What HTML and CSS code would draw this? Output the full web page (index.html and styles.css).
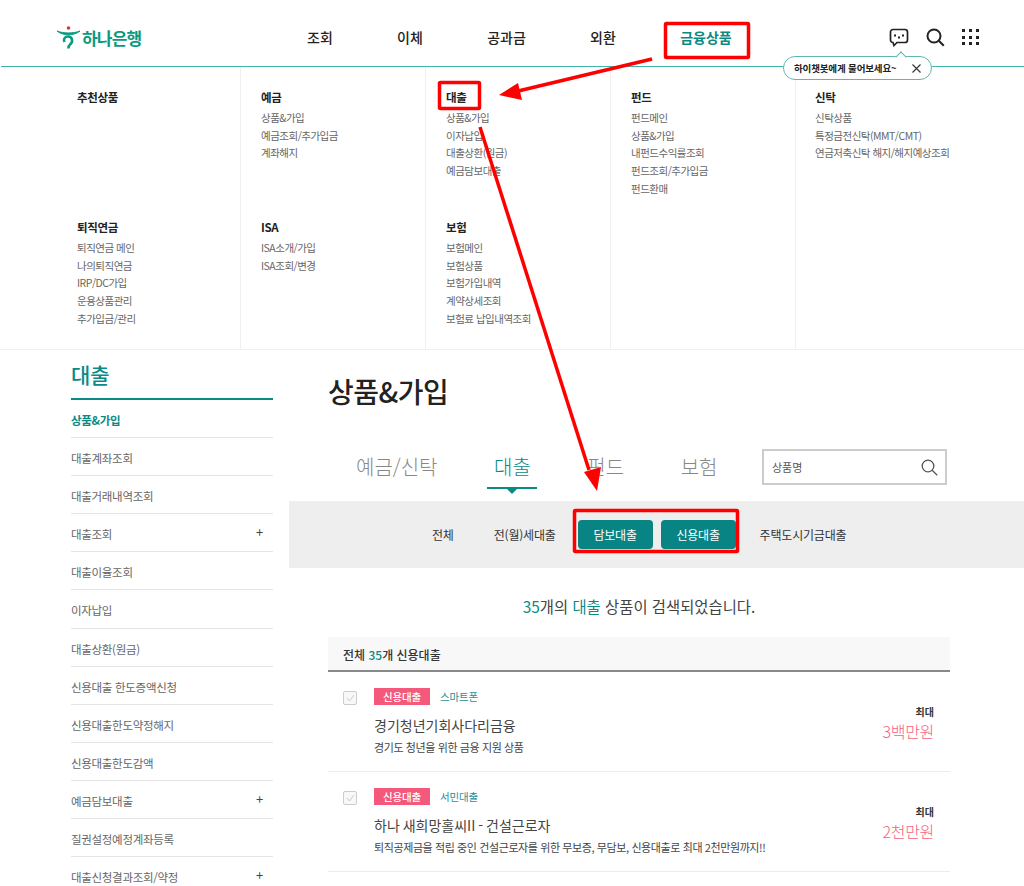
FILE: index.html
```html
<!DOCTYPE html>
<html lang="ko">
<head>
    <meta charset="UTF-8">
    <title>상품&amp;가입</title>
    <link rel="stylesheet" href="styles.css">
</head>
<body>
<div class="page">

    <header class="top">
        <div class="logo">
            <svg class="logo-mark" width="23" height="23" viewBox="0 0 23 23">
                <circle cx="11.500" cy="2" r="1.800" fill="#e0303a"/>
                <path d="M0 5c6 2.600 17 2.600 23 0-6 5-17 5-23 0z" fill="#0a9a80" stroke="#0a9a80" stroke-width="1"/>
                <path d="M7.500 16c-1.500-3 .5-5.500 3.500-5.500 4.500 0 5.500 5.500 2 8-1 .8-1.500 2-1.500 4" fill="none" stroke="#0a9a80" stroke-width="2.600"/>
            </svg>
            <span>하나은행</span>
        </div>
        <nav class="gnb">
            <a>조회</a>
            <a>이체</a>
            <a>공과금</a>
            <a>외환</a>
            <a class="on">금융상품</a>
        </nav>
        <div class="top-icons">
            <svg width="20" height="19" viewBox="0 0 20 19" fill="none" stroke="#222" stroke-width="1.700">
                <path d="M4 1.500h12a2.500 2.500 0 0 1 2.500 2.500v8a2.500 2.500 0 0 1-2.500 2.500H8l-3 3-1-3a2.500 2.500 0 0 1-2.500-2.500V4A2.500 2.500 0 0 1 4 1.500z"/>
                <path d="M5 7.500h2M13 7.500h2M9 9.500h2" stroke-width="2"/>
            </svg>
            <svg width="19" height="19" viewBox="0 0 19 19" fill="none" stroke="#222" stroke-width="2">
                <circle cx="8" cy="8" r="6.500"/>
                <path d="M12.800 12.800l5 5"/>
            </svg>
            <div class="dots">
                <i></i><i></i><i></i><i></i><i></i><i></i><i></i><i></i><i></i>
            </div>
        </div>
        <div class="chat-tip">
            <span>하이챗봇에게 물어보세요~</span>
            <svg width="9" height="9" viewBox="0 0 9 9" stroke="#333" stroke-width="1.100"><path d="M.5.500l8 8M8.500.500l-8 8"/></svg>
        </div>
    </header>

    <section class="mega">
        <div class="mega-col first">
            <h3>추천상품</h3>
        </div>
        <div class="mega-col">
            <h3>예금</h3>
            <a>상품&amp;가입</a><a>예금조회/추가입금</a><a>계좌해지</a>
        </div>
        <div class="mega-col">
            <h3>대출</h3>
            <a>상품&amp;가입</a><a>이자납입</a><a>대출상환(원금)</a><a>예금담보대출</a>
        </div>
        <div class="mega-col">
            <h3>펀드</h3>
            <a>펀드메인</a><a>상품&amp;가입</a><a>내펀드수익률조회</a><a>펀드조회/추가입금</a><a>펀드환매</a>
        </div>
        <div class="mega-col last">
            <h3>신탁</h3>
            <a>신탁상품</a><a>특정금전신탁(MMT/CMT)</a><a>연금저축신탁 해지/해지예상조회</a>
        </div>
        <div class="mega-col first">
            <h3>퇴직연금</h3>
            <a>퇴직연금 메인</a><a>나의퇴직연금</a><a>IRP/DC가입</a><a>운용상품관리</a><a>추가입금/관리</a>
        </div>
        <div class="mega-col">
            <h3>ISA</h3>
            <a>ISA소개/가입</a><a>ISA조회/변경</a>
        </div>
        <div class="mega-col">
            <h3>보험</h3>
            <a>보험메인</a><a>보험상품</a><a>보험가입내역</a><a>계약상세조회</a><a>보험료 납입내역조회</a>
        </div>
        <div class="mega-col"></div>
        <div class="mega-col last"></div>
    </section>

    <div class="content">
        <aside class="side">
            <h2>대출</h2>
            <ul>
                <li class="on">상품&amp;가입</li>
                <li>대출계좌조회</li>
                <li>대출거래내역조회</li>
                <li class="more">대출조회</li>
                <li>대출이율조회</li>
                <li>이자납입</li>
                <li>대출상환(원금)</li>
                <li>신용대출 한도증액신청</li>
                <li>신용대출한도약정해지</li>
                <li>신용대출한도감액</li>
                <li class="more">예금담보대출</li>
                <li>질권설정예정계좌등록</li>
                <li class="more">대출신청결과조회/약정</li>
            </ul>
        </aside>

        <main class="main">
            <h1>상품&amp;가입</h1>
            <div class="tab-row">
                <div class="tabs">
                    <a>예금/신탁</a>
                    <a class="on">대출</a>
                    <a>펀드</a>
                    <a>보험</a>
                </div>
                <div class="search">
                    <span>상품명</span>
                    <svg width="17" height="17" viewBox="0 0 17 17" fill="none" stroke="#555" stroke-width="1.300">
                        <circle cx="7" cy="7" r="5.800"/>
                        <path d="M11.200 11.200l5 5"/>
                    </svg>
                </div>
            </div>
            <div class="band">
                <a>전체</a>
                <a>전(월)세대출</a>
                <div class="band-btns">
                    <a class="btn">담보대출</a>
                    <a class="btn">신용대출</a>
                </div>
                <a>주택도시기금대출</a>
            </div>
            <p class="result"><em>35</em>개의 <em>대출</em> 상품이 검색되었습니다.</p>

            <div class="list-head">전체 <em>35</em>개 신용대출</div>

            <div class="item">
                <span class="check">
                    <svg width="9" height="8" viewBox="0 0 9 8" fill="none" stroke="#ccc" stroke-width="1"><path d="M1 4l2.500 3L8 1"/></svg>
                </span>
                <div class="item-body">
                    <div class="item-tags"><b>신용대출</b><span>스마트폰</span></div>
                    <h4>경기청년기회사다리금융</h4>
                    <p>경기도 청년을 위한 금융 지원 상품</p>
                </div>
                <div class="item-limit">
                    <small>최대</small>
                    <strong>3백만원</strong>
                </div>
            </div>
            <div class="item">
                <span class="check">
                    <svg width="9" height="8" viewBox="0 0 9 8" fill="none" stroke="#ccc" stroke-width="1"><path d="M1 4l2.500 3L8 1"/></svg>
                </span>
                <div class="item-body">
                    <div class="item-tags"><b>신용대출</b><span>서민대출</span></div>
                    <h4>하나 새희망홀씨II - 건설근로자</h4>
                    <p>퇴직공제금을 적립 중인 건설근로자를 위한 무보증, 무담보, 신용대출로 최대 2천만원까지!!</p>
                </div>
                <div class="item-limit">
                    <small>최대</small>
                    <strong>2천만원</strong>
                </div>
            </div>
        </main>
    </div>

    <!-- 빨간 표시 -->
    <svg class="marks" width="1024" height="886" viewBox="0 0 1024 886" fill="none">
        <rect x="665.500" y="23.500" width="83" height="34" rx="1" stroke="#f00" stroke-width="3.500"/>
        <rect x="439.500" y="82.500" width="40" height="26" rx="1" stroke="#f00" stroke-width="3.500"/>
        <rect x="574.500" y="510.500" width="163" height="41" rx="1" stroke="#f00" stroke-width="3.500"/>
        <path d="M652 59L514 92" stroke="#f00" stroke-width="3.500"/>
        <path d="M499 95l19-12 4 17z" fill="#f00"/>
        <path d="M480 127L589 470" stroke="#f00" stroke-width="3.500"/>
        <path d="M597 491l-13-19 17-5z" fill="#f00"/>
    </svg>
</div>
</body>
</html>
```

FILE: styles.css
```css
*{
    padding: 0;
    margin: 0;
    box-sizing: border-box;
}
body{
    font-family: "Noto Sans CJK KR", "Noto Sans", sans-serif;
    color: #333;
    background: #fff;
}
em{
    font-style: normal;
    color: #0a8a85;
}
.page{
    width: 1024px;
    height: 886px;
    overflow: hidden;
    position: relative;
}
.marks{
    position: absolute;
    top: 0;
    left: 0;
}

/* 상단 */
.top{
    height: 67px;
    margin-left: 1px;
    padding-left: 56px;
    padding-top: 9px;
    display: flex;
    align-items: center;
    border-bottom: 1px solid #3fb5ae;
    position: relative;
}
.logo{
    width: 250px;
    display: flex;
    align-items: center;
    gap: 2px;
    margin-top: -1px;
    color: #0a9a80;
    font-size: 17px;
    font-weight: 700;
    letter-spacing: -.8px;
}
.gnb{
    display: flex;
    gap: 64.300px;
    margin-top: -1px;
}
.gnb a{
    font-size: 14px;
    font-weight: 500;
    color: #222;
}
.gnb .on{
    color: #0a8a80;
    font-weight: 700;
}
.top-icons{
    margin-left: auto;
    margin-right: 45px;
    display: flex;
    align-items: center;
    gap: 17px;
    margin-top: -1px;
}
.dots{
    width: 17px;
    display: grid;
    grid-template-columns: repeat(3, 3px);
    justify-content: space-between;
    row-gap: 3.500px;
}
.dots i{
    width: 3px;
    height: 3px;
    background: #222;
}
.chat-tip{
    position: absolute;
    top: 56px;
    left: 782px;
    width: 149px;
    height: 24px;
    padding: 0 10px;
    display: flex;
    align-items: center;
    justify-content: space-between;
    background: #fff;
    border: 1px solid #5cb8b0;
    border-radius: 12px;
    font-size: 9.500px;
    font-weight: 700;
    letter-spacing: -.15px;
    color: #222;
}
.chat-tip:before{
    content: "";
    position: absolute;
    top: -4px;
    left: 113px;
    width: 7px;
    height: 7px;
    background: #fff;
    border-left: 1px solid #5cb8b0;
    border-top: 1px solid #5cb8b0;
    transform: rotate(45deg);
}

/* 전체메뉴 */
.mega{
    height: 283px;
    display: grid;
    grid-template-columns: 241px 185px 185px 185px 1fr;
    grid-template-rows: 130px 153px;
    border-bottom: 1px solid #f0f0f0;
}
.mega-col{
    padding: 21px 0 0 20px;
    border-right: 1px solid #f0f0f0;
}
.mega-col.first{
    padding-left: 77px;
}
.mega-col.last{
    border-right: 0;
    padding-left: 19px;
}
.mega-col h3{
    font-size: 11.500px;
    line-height: 18px;
    font-weight: 700;
    color: #222;
    letter-spacing: -.3px;
    margin-bottom: 3px;
}
.mega-col a{
    display: block;
    font-size: 10.500px;
    line-height: 17.700px;
    letter-spacing: -.5px;
    color: #666;
    white-space: nowrap;
}

/* 본문 */
.content{
    display: flex;
    align-items: flex-start;
}
.side{
    width: 202px;
    margin-left: 71px;
    padding-top: 8px;
}
.side h2{
    font-size: 21px;
    line-height: 32px;
    font-weight: 500;
    color: #0a8a85;
    padding-bottom: 8px;
    border-bottom: 2px solid #0a8a85;
}
.side ul{
    list-style: none;
}
.side li{
    height: 38.100px;
    line-height: 41px;
    font-size: 11.500px;
    letter-spacing: -.3px;
    color: #666;
    border-bottom: 1px solid #e4e4e4;
    position: relative;
}
.side li.on{
    color: #0a8a85;
    font-weight: 700;
}
.side li.more:after{
    content: "+";
    position: absolute;
    right: 10px;
    top: -3px;
    font-size: 13px;
    color: #444;
}
.main{
    width: 735px;
    margin-left: 16px;
}
.main h1{
    margin: 22px 0 0 39px;
    font-size: 28px;
    line-height: 38px;
    font-weight: 500;
    color: #222;
    letter-spacing: -.5px;
}
.tab-row{
    height: 51px;
    margin-top: 40px;
    display: flex;
    padding-left: 67px;
}
.tabs{
    width: 406px;
    display: flex;
    gap: 56.500px;
}
.tabs a{
    position: relative;
    height: 45px;
    padding-top: 1px;
    font-size: 20px;
    line-height: 32px;
    font-weight: 300;
    color: #888;
}
.tabs .on{
    color: #0a8a85;
}
.tabs .on:before{
    content: "";
    position: absolute;
    left: -7px;
    right: -6px;
    top: 37px;
    height: 2px;
    background: #0a8a85;
}
.tabs .on:after{
    content: "";
    position: absolute;
    left: 13px;
    top: 39px;
    border-left: 5px solid transparent;
    border-right: 5px solid transparent;
    border-top: 5px solid #0a8a85;
}
.search{
    width: 185px;
    height: 36px;
    margin-top: -1px;
    display: flex;
    align-items: center;
    justify-content: space-between;
    padding: 0 7px 0 8px;
    border: 2px solid #ccc;
    font-size: 11px;
    color: #555;
}
.band{
    height: 67px;
    padding-left: 143px;
    display: flex;
    align-items: center;
    gap: 40px;
    background: #eee;
    font-size: 12px;
    letter-spacing: -.2px;
    color: #333;
}
.band-btns{
    display: flex;
    gap: 8px;
    margin-left: -18px;
    margin-right: -16px;
}
.btn{
    width: 75px;
    height: 29px;
    line-height: 29px;
    text-align: center;
    background: #088484;
    color: #fff;
    border-radius: 4px;
}
.result{
    width: 622px;
    margin: 27px 0 0 39px;
    text-align: center;
    font-size: 15.400px;
    line-height: 22px;
    color: #444;
}
.list-head{
    width: 622px;
    height: 35px;
    margin: 20px 0 0 39px;
    padding-left: 15px;
    line-height: 36px;
    font-size: 12px;
    font-weight: 500;
    color: #333;
    background: #f8f8f8;
    border-bottom: 2px solid #888;
}
.item{
    width: 622px;
    height: 100px;
    margin-left: 39px;
    padding: 16px 17px 0 15px;
    display: flex;
    border-bottom: 1px solid #ececec;
}
.check{
    width: 14px;
    height: 14px;
    margin-top: 3px;
    display: flex;
    align-items: center;
    justify-content: center;
    border: 1px solid #ccc;
    border-radius: 2px;
    background: #f8f8f8;
}
.item-body{
    margin-left: 17px;
    flex: 1;
}
.item-tags{
    display: flex;
    align-items: center;
    gap: 10px;
    font-size: 10.500px;
    letter-spacing: -.2px;
}
.item-tags b{
    width: 56px;
    height: 17px;
    line-height: 17px;
    text-align: center;
    font-weight: 500;
    background: #f4587a;
    color: #fff;
}
.item-tags span{
    color: #2a8f9a;
}
.item-body h4{
    margin-top: 9px;
    font-size: 14px;
    line-height: 22px;
    font-weight: 400;
    word-spacing: -1px;
    color: #444;
}
.item-body p{
    margin-top: 2px;
    font-size: 11px;
    line-height: 18px;
    letter-spacing: -.4px;
    color: #444;
}
.item-limit{
    margin-top: 16px;
    margin-right: -1px;
    text-align: right;
}
.item-limit small{
    display: block;
    font-size: 10px;
    line-height: 16px;
    font-weight: 700;
    color: #333;
}
.item-limit strong{
    display: block;
    font-size: 16px;
    line-height: 22px;
    font-weight: 300;
    letter-spacing: -.3px;
    color: #f7607f;
}
```
